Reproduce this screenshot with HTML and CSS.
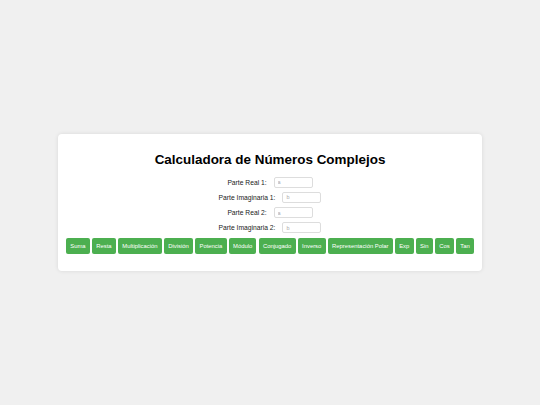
FILE: index.html
```html
<!DOCTYPE html>
<html lang="es">
  <head>
    <meta charset="UTF-8" />
    <meta name="viewport" content="width=device-width, initial-scale=1.0" />
    <title>Calculadora de Números Complejos</title>
    <link rel="stylesheet" href="styles.css">
  </head>
  <body>
    <div class="calculator">
      <h1>Calculadora de Números Complejos</h1>
      <div class="field">
        <label for="real1">Parte Real 1:</label>
        <input type="number" id="real1" placeholder="a" />
      </div>
      <div class="field">
        <label for="imag1">Parte Imaginaria 1:</label>
        <input type="number" id="imag1" placeholder="b" />
      </div>
      <div class="field">
        <label for="real2">Parte Real 2:</label>
        <input type="number" id="real2" placeholder="a" />
      </div>
      <div class="field">
        <label for="imag2">Parte Imaginaria 2:</label>
        <input type="number" id="imag2" placeholder="b" />
      </div>
      <div class="buttons">
        <button class="btn">Suma</button>
        <button class="btn">Resta</button>
        <button class="btn">Multiplicación</button>
        <button class="btn">División</button>
        <button class="btn">Potencia</button>
        <button class="btn">Módulo</button>
        <button class="btn">Conjugado</button>
        <button class="btn">Inverso</button>
        <button class="btn">Representación Polar</button>
        <button class="btn">Exp</button>
        <button class="btn">Sin</button>
        <button class="btn">Cos</button>
        <button class="btn">Tan</button>
      </div>
    </div>
  </body>
</html>
```

FILE: styles.css
```css
* {
  box-sizing: border-box;
}

body {
  margin: 0;
  height: 100vh;
  font-family: "Liberation Sans", Arial, sans-serif;
  font-size: 6.72px;
  background-color: #f0f0f0;
  display: flex;
  align-items: center;
  justify-content: center;
}

.calculator {
  width: 424px;
  padding: 9.4px 8px 8.4px;
  background: #fff;
  border-radius: 4px;
  box-shadow: 0 0 4px rgba(0, 0, 0, 0.1);
  text-align: center;
}

h1 {
  font-size: 13.44px;
  margin: 9px 0 9.6px;
  color: #000;
}

.field {
  display: flex;
  align-items: center;
  justify-content: center;
  gap: 7px;
  margin-bottom: 4.3px;
  color: #222;
}

.field input {
  width: 39px;
  height: 11px;
  padding: 0 3px;
  border: 1px solid #ddd;
  border-radius: 2px;
  font-family: inherit;
  font-size: 5.5px;
  outline: none;
}

.field input::placeholder {
  color: #aaa;
}

.buttons {
  display: flex;
  flex-wrap: nowrap;
  justify-content: center;
  gap: 2.3px;
  margin: 1px 0 9px;
}

.btn {
  flex: none;
  background-color: #4caf50;
  color: #fff;
  border: none;
  border-radius: 2px;
  font-family: inherit;
  font-size: 5.88px;
  font-weight: normal;
  padding: 5.2px 4.2px;
  cursor: pointer;
}

.btn:hover {
  background-color: #45a049;
}
```
